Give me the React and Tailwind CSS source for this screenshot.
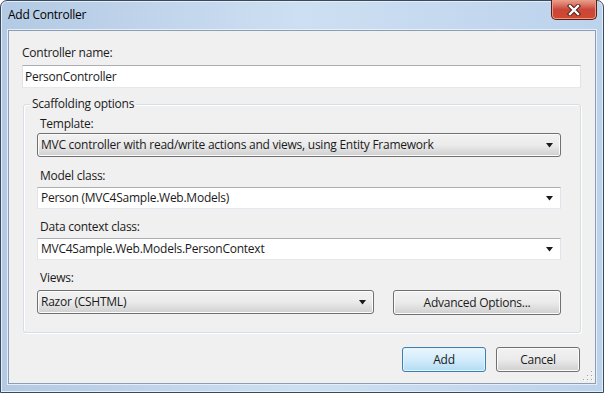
import React from 'react';

const font = { fontFamily: '"Open Sans", "Noto Sans", sans-serif' };

const Arrow = () => (
  <svg width="8" height="5" viewBox="0 0 8 5" className="shrink-0">
    <path d="M0 0h7L3.5 4.5z" fill="#1a1a1a" />
  </svg>
);

// non-editable dropdown: looks like a button
const DropList = ({ value, className = '' }) => (
  <div className={`flex items-center h-[24px] rounded-[3px] border border-[#707070] bg-gradient-to-b from-[#f2f2f2] via-[#ebebeb] to-[#cfcfcf] pl-[3px] pr-[6px] shadow-[inset_0_0_0_1px_#fcfcfc] ${className}`}>
    <span className="flex-1 truncate">{value}</span>
    <Arrow />
  </div>
);

// editable combo: white box
const ComboBox = ({ value }) => (
  <div className="flex items-center h-[22px] border border-[#e2e3ea] border-t-[#abadb3] border-b-[#e3e9ef] bg-white pl-[3px] pr-[6px]">
    <span className="flex-1 truncate">{value}</span>
    <Arrow />
  </div>
);

const Button = ({ children, primary }) => (
  <button
    className={`h-[25px] w-[84px] rounded-[3px] border text-center ${
      primary
        ? 'border-[#3c7fb1] bg-gradient-to-b from-[#eaf6fd] via-[#d3ecfb] to-[#b2dcf4] shadow-[inset_0_0_0_1px_#e4f4fd]'
        : 'border-[#707070] bg-gradient-to-b from-[#f2f2f2] via-[#ebebeb] to-[#cfcfcf] shadow-[inset_0_0_0_1px_#fcfcfc]'
    }`}
  >
    {children}
  </button>
);

export default function App() {
  return (
    <div style={font} className="w-[604px] h-[393px] text-[12px] leading-[16px] tracking-[-0.25px] text-[#1a1a1a] bg-white">
      <div className="w-[604px] h-[393px] flex flex-col rounded-t-[7px] border border-[#3a4a5e] bg-gradient-to-r from-[#b3cae4] via-[#cddff2] to-[#bcd3ec] shadow-[inset_0_0_0_1px_#e4eef8]">
        {/* title bar */}
        <div className="h-[29px] flex items-start justify-between pl-[7px] pr-[6px]">
          <span className="mt-[6px] text-[12px] text-black">Add Controller</span>
          <div className="w-[46px] h-[20px] -mt-px flex items-center justify-center rounded-b-[5px] border border-[#5a1e18] border-t-0 bg-gradient-to-b from-[#e9a08e] via-[#c9473a] to-[#d2482c] shadow-[inset_0_0_0_1px_#eb9a86]">
            <svg width="14" height="12" viewBox="0 0 14 12">
              <path d="M3 2l8 8M11 2l-8 8" stroke="#4a1a14" strokeWidth="4.2" strokeLinecap="square" />
              <path d="M3 2l8 8M11 2l-8 8" stroke="#ffffff" strokeWidth="2.4" strokeLinecap="square" />
            </svg>
          </div>
        </div>

        {/* client area */}
        <div className="relative flex-1 mx-[7px] mb-[8px] border border-[#8c9eb4] bg-[#f0f0f0] shadow-[0_0_0_1px_#e6eff8]">
          <div className="pl-[13px] pr-[14px]">
            <div className="pt-[14px] h-[34px]">Controller name:</div>
            <div className="h-[23px] flex items-center border border-[#e2e3ea] border-t-[#abadb3] border-b-[#e3e9ef] bg-white pl-[2px]">
              PersonController
            </div>
          </div>

          {/* scaffolding group */}
          <div className="relative mt-[16px] ml-[14px] mr-[14px] h-[229px] rounded-[3px] border border-[#d5dfe5] shadow-[inset_1px_1px_0_#ffffff,1px_1px_0_#ffffff] pl-[13px] pr-[19px] pt-[11px]">
            <span className="absolute -top-[9px] left-[6px] px-[2px] bg-[#f0f0f0]">Scaffolding options</span>

            <div className="pl-[3px]">Template:</div>
            <DropList className="mt-[1px]" value="MVC controller with read/write actions and views, using Entity Framework" />

            <div className="mt-[11px] pl-[3px]">Model class:</div>
            <div className="mt-[3px]">
              <ComboBox value="Person (MVC4Sample.Web.Models)" />
            </div>

            <div className="mt-[10px] pl-[3px]">Data context class:</div>
            <div className="mt-[3px]">
              <ComboBox value="MVC4Sample.Web.Models.PersonContext" />
            </div>

            <div className="mt-[10px] pl-[3px]">Views:</div>
            <div className="mt-[4px] flex gap-[19px]">
              <DropList className="w-[337px]" value="Razor (CSHTML)" />
              <button className="flex-1 h-[25px] rounded-[3px] border border-[#707070] bg-gradient-to-b from-[#f2f2f2] via-[#ebebeb] to-[#cfcfcf] shadow-[inset_0_0_0_1px_#fcfcfc]">
                Advanced Options...
              </button>
            </div>
          </div>

          {/* buttons */}
          <div className="flex justify-end gap-[10px] mt-[14px] pr-[15px]">
            <Button primary>Add</Button>
            <Button>Cancel</Button>
          </div>

          {/* resize grip */}
          <svg className="absolute right-[2px] bottom-[2px]" width="11" height="11" viewBox="0 0 11 11">
            {[[9, 1], [9, 5], [5, 5], [9, 9], [5, 9], [1, 9]].map(([x, y], i) => (
              <g key={i}>
                <rect x={x + 1} y={y + 1} width="1" height="1" fill="#ffffff" />
                <rect x={x} y={y} width="1" height="1" fill="#a0a0a0" />
              </g>
            ))}
          </svg>
        </div>
      </div>
    </div>
  );
}
